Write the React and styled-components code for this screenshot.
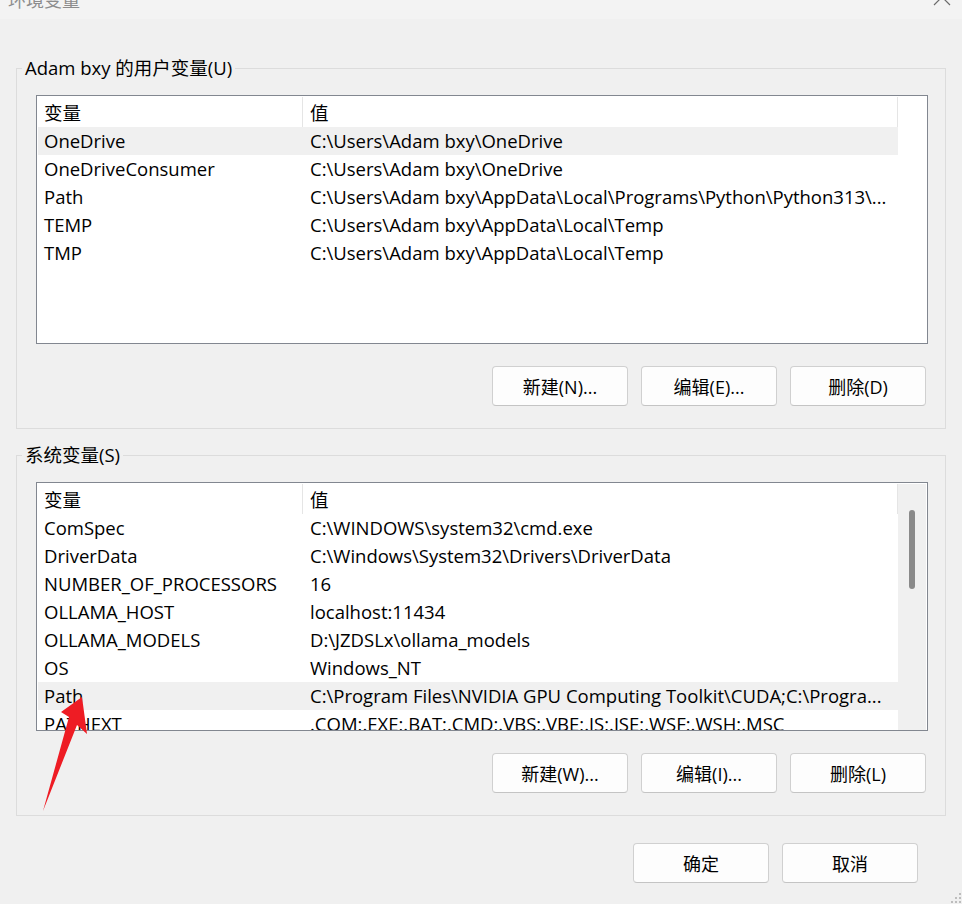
import React from "react";
import styled, { createGlobalStyle } from "styled-components";

const GlobalStyle = createGlobalStyle`
  html, body {
    margin: 0;
    padding: 0;
    background: #f0f0f0;
  }
`;

const userVars = [
  ["OneDrive", "C:\\Users\\Adam bxy\\OneDrive"],
  ["OneDriveConsumer", "C:\\Users\\Adam bxy\\OneDrive"],
  ["Path", "C:\\Users\\Adam bxy\\AppData\\Local\\Programs\\Python\\Python313\\..."],
  ["TEMP", "C:\\Users\\Adam bxy\\AppData\\Local\\Temp"],
  ["TMP", "C:\\Users\\Adam bxy\\AppData\\Local\\Temp"],
];

const systemVars = [
  ["ComSpec", "C:\\WINDOWS\\system32\\cmd.exe"],
  ["DriverData", "C:\\Windows\\System32\\Drivers\\DriverData"],
  ["NUMBER_OF_PROCESSORS", "16"],
  ["OLLAMA_HOST", "localhost:11434"],
  ["OLLAMA_MODELS", "D:\\JZDSLx\\ollama_models"],
  ["OS", "Windows_NT"],
  ["Path", "C:\\Program Files\\NVIDIA GPU Computing Toolkit\\CUDA;C:\\Progra..."],
  ["PATHEXT", ".COM;.EXE;.BAT;.CMD;.VBS;.VBE;.JS;.JSE;.WSF;.WSH;.MSC"],
];

const EnvDialog = () => {
  return (
    <Window>
      <GlobalStyle />
      <TitleBar>
        <Title>环境变量</Title>
        <CloseIcon width="20" height="20" viewBox="0 0 20 20">
          <path d="M2 2 L18 18 M18 2 L2 18" stroke="#6b6b6b" strokeWidth="1.2" fill="none" />
        </CloseIcon>
      </TitleBar>

      <Body>
        <Group>
          <GroupTitle>Adam bxy 的用户变量(U)</GroupTitle>
          <VarList rows={userVars} selected={0} />
          <ButtonRow>
            <Button>新建(N)...</Button>
            <Button>编辑(E)...</Button>
            <Button>删除(D)</Button>
          </ButtonRow>
        </Group>

        <Group $gap>
          <GroupTitle>系统变量(S)</GroupTitle>
          <VarList rows={systemVars} selected={6} scroll />
          <ButtonRow>
            <Button>新建(W)...</Button>
            <Button>编辑(I)...</Button>
            <Button>删除(L)</Button>
          </ButtonRow>
        </Group>

        <Footer>
          <Button>确定</Button>
          <Button>取消</Button>
        </Footer>
      </Body>

      {/* red annotation arrow drawn over the screenshot */}
      <Overlay width="962" height="904" viewBox="0 0 962 904">
        <polygon
          points="82,697 87,734 77,725 43,811 69,717 61,712"
          fill="#ee1c24"
        />
      </Overlay>

      <Grip width="12" height="12" viewBox="0 0 12 12">
        <rect x="9" y="1" width="2" height="2" fill="#bdbdbd" />
        <rect x="5" y="5" width="2" height="2" fill="#bdbdbd" />
        <rect x="9" y="5" width="2" height="2" fill="#bdbdbd" />
        <rect x="1" y="9" width="2" height="2" fill="#bdbdbd" />
        <rect x="5" y="9" width="2" height="2" fill="#bdbdbd" />
        <rect x="9" y="9" width="2" height="2" fill="#bdbdbd" />
      </Grip>
    </Window>
  );
};

const VarList = ({ rows, selected, scroll }) => (
  <ListBox>
    <Table>
      <HeaderRow>
        <NameCell $head>变量</NameCell>
        <ValueCell>值</ValueCell>
      </HeaderRow>
      {rows.map(([name, value], i) => (
        <Row key={name + i} $selected={i === selected}>
          <NameCell>{name}</NameCell>
          <ValueCell>{value}</ValueCell>
        </Row>
      ))}
    </Table>
    <Side $scroll={scroll}>{scroll && <Thumb />}</Side>
  </ListBox>
);

const Window = styled.div`
  width: 962px;
  height: 904px;
  position: relative;
  overflow: hidden;
  background: #f0f0f0;
  display: flex;
  flex-direction: column;
  font-family: "Open Sans", "Noto Sans CJK SC", sans-serif;
  font-size: 18.5px;
  color: #000;
`;

const TitleBar = styled.div`
  height: 19px;
  flex: none;
  background: #f3f3f3;
  display: flex;
  justify-content: space-between;
  align-items: flex-start;
  padding: 0 10px 0 8px;
  overflow: hidden;
`;

const Title = styled.span`
  margin-top: -13px;
  font-family: "Noto Sans CJK SC", sans-serif;
  font-size: 18px;
  line-height: 24px;
  color: #8c8c8c;
`;

const CloseIcon = styled.svg`
  margin-top: -13px;
`;

const Body = styled.div`
  display: flex;
  flex-direction: column;
  padding: 49px 16px 0;
`;

const Group = styled.section`
  border: 1px solid #dcdcdc;
  margin-top: ${(p) => (p.$gap ? "26px" : "0")};
  padding: 0 17px 22px 19px;
  display: flex;
  flex-direction: column;
`;

const GroupTitle = styled.div`
  align-self: flex-start;
  margin: -13px 0 0 -14px;
  padding: 0 3px;
  background: #f0f0f0;
  line-height: 24px;
  white-space: nowrap;
`;

const ListBox = styled.div`
  margin-top: 15px;
  height: 249px;
  box-sizing: border-box;
  border: 1px solid #828790;
  background: #fff;
  padding: 1px 1px 0 1px;
  display: flex;
  overflow: hidden;
`;

const Table = styled.div`
  width: 860px;
  flex: none;
  display: flex;
  flex-direction: column;
`;

const HeaderRow = styled.div`
  height: 30px;
  flex: none;
  display: flex;
  align-items: center;
  border-right: 1px solid #e5e5e5;
`;

const Row = styled.div`
  height: 28px;
  flex: none;
  box-sizing: border-box;
  padding-bottom: 2px;
  display: flex;
  align-items: center;
  background: ${(p) => (p.$selected ? "#f0f0f0" : "#fff")};
`;

const NameCell = styled.div`
  width: 265px;
  flex: none;
  box-sizing: border-box;
  padding-left: 6px;
  align-self: stretch;
  display: flex;
  align-items: center;
  white-space: nowrap;
  border-right: ${(p) => (p.$head ? "1px solid #e5e5e5" : "none")};
`;

const ValueCell = styled.div`
  flex: 1;
  min-width: 0;
  padding-left: 7px;
  white-space: nowrap;
  overflow: hidden;
`;

const Side = styled.div`
  flex: 1;
  background: ${(p) => (p.$scroll ? "#f0f0f0" : "#fff")};
  padding: 26px 0 0 11px;
`;

const Thumb = styled.div`
  width: 6px;
  height: 79px;
  border-radius: 3px;
  background: #8a8a8a;
`;

const ButtonRow = styled.div`
  display: flex;
  justify-content: flex-end;
  gap: 13px;
  margin: 22px 2px 0 0;
`;

const Button = styled.button`
  width: 136px;
  height: 40px;
  box-sizing: border-box;
  background: #fdfdfd;
  border: 1px solid #d0d0d0;
  border-bottom-color: #c4c4c4;
  border-radius: 4px;
  font-family: "Open Sans", "Noto Sans CJK SC", sans-serif;
  font-size: 18px;
  color: #000;
  padding: 0;
`;

const Footer = styled.div`
  display: flex;
  justify-content: flex-end;
  gap: 13px;
  margin: 27px 28px 0 0;
`;

const Overlay = styled.svg`
  position: absolute;
  left: 0;
  top: 0;
  pointer-events: none;
`;

const Grip = styled.svg`
  position: absolute;
  right: 0;
  bottom: 0;
`;

export default function App() {
  return <EnvDialog />;
}
